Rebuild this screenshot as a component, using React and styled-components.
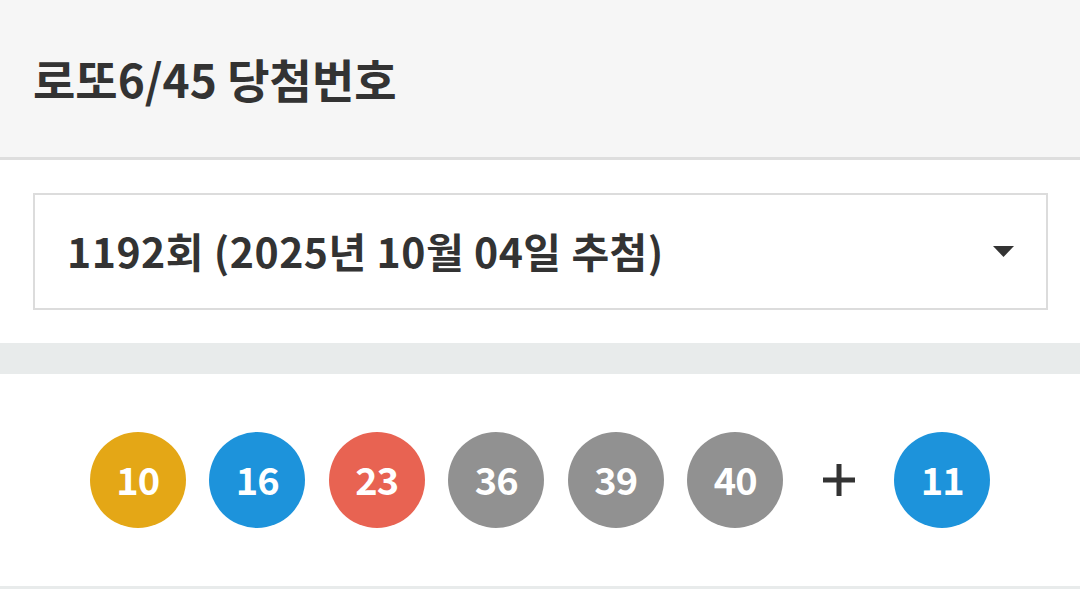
import React from "react";
import styled, { createGlobalStyle } from "styled-components";

const GlobalStyle = createGlobalStyle`
  html, body {
    margin: 0;
    padding: 0;
    background: #ffffff;
  }
  body {
    font-family: "Noto Sans CJK KR", "Noto Sans", sans-serif;
    color: #333333;
  }
`;

const Page = styled.div`
  width: 1080px;
  background: #ffffff;
`;

const Header = styled.header`
  box-sizing: border-box;
  height: 160px;
  background: #f6f6f6;
  border-bottom: 3px solid #dedede;
  display: flex;
  align-items: center;
  padding-left: 33px;
  padding-bottom: 2px;
`;

const Title = styled.h2`
  margin: 0;
  font-size: 46px;
  font-weight: 700;
  color: #333333;
  letter-spacing: 0;
  line-height: 1;
`;

const SelectSection = styled.div`
  padding: 33px 32px 33px 33px;
`;

const SelectBox = styled.div`
  height: 117px;
  box-sizing: border-box;
  border: 2px solid #dcdcdc;
  display: flex;
  align-items: center;
  justify-content: space-between;
  padding: 0 32px 0 32px;
`;

const SelectText = styled.span`
  font-size: 41px;
  font-weight: 700;
  color: #333333;
  letter-spacing: 0.5px;
  line-height: 1;
  padding-bottom: 3px;
`;

const Caret = styled.svg`
  width: 21px;
  height: 11px;
  display: block;
`;

const Band = styled.div`
  height: 31px;
  background: #e8ebeb;
`;

const BallsSection = styled.div`
  height: 216px;
  box-sizing: border-box;
  border-bottom: 4px solid #e8ebeb;
  display: flex;
  align-items: center;
  justify-content: center;
  gap: 23.5px;
`;

const Ball = styled.div`
  width: 96px;
  height: 96px;
  border-radius: 50%;
  background: ${(p) => p.$color};
  color: #ffffff;
  display: flex;
  align-items: center;
  justify-content: center;
  font-size: 38px;
  font-weight: 700;
  letter-spacing: -1px;
  line-height: 1;
  padding-bottom: 3px;
  box-sizing: border-box;
`;

const Plus = styled.svg`
  width: 64px;
  height: 32px;
  display: block;
`;

const ballColor = (n) => {
  if (n <= 10) return "#e4a716";
  if (n <= 20) return "#1d93db";
  if (n <= 30) return "#e86352";
  if (n <= 40) return "#919191";
  return "#8ec549";
};

const numbers = [10, 16, 23, 36, 39, 40];
const bonus = 11;

export default function App() {
  return (
    <Page>
      <GlobalStyle />
      <Header>
        <Title>로또6/45 당첨번호</Title>
      </Header>
      <SelectSection>
        <SelectBox>
          <SelectText>1192회 (2025년 10월 04일 추첨)</SelectText>
          <Caret viewBox="0 0 21 11">
            <polygon points="0,0 21,0 10.5,11" fill="#333333" />
          </Caret>
        </SelectBox>
      </SelectSection>
      <Band />
      <BallsSection>
        {numbers.map((n) => (
          <Ball key={n} $color={ballColor(n)}>
            {n}
          </Ball>
        ))}
        <Plus viewBox="0 0 64 32">
          <rect x="16" y="13.5" width="32" height="5" fill="#333333" />
          <rect x="29.5" y="0" width="5" height="32" fill="#333333" />
        </Plus>
        <Ball $color={ballColor(bonus)}>{bonus}</Ball>
      </BallsSection>
    </Page>
  );
}
